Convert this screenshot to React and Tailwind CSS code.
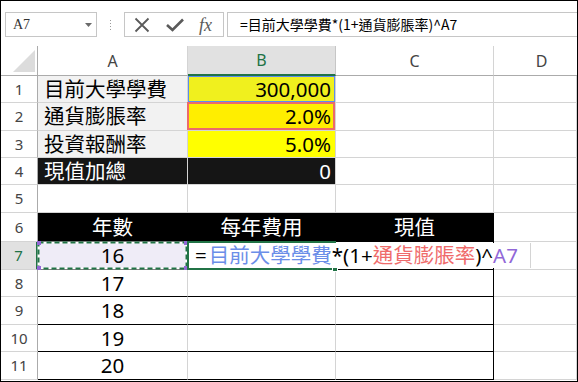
import React from "react";
import { twMerge } from "tailwind-merge";

const font = "font-['Noto_Sans','Noto_Sans_CJK_TC',sans-serif]";

function Cell({ w, className, children }) {
  return (
    <div
      className={twMerge(
        "relative shrink-0 h-full flex items-center whitespace-nowrap border-r border-b border-r-[#d4d4d4] border-b-[#d4d4d4] text-[20.5px] leading-none text-black",
        w,
        className
      )}
    >
      {children}
    </div>
  );
}

function RowHead({ n, active }) {
  return (
    <div
      className={twMerge(
        "w-[37px] shrink-0 h-full flex items-center justify-center border-r border-b border-r-[#ababab] border-b-[#d4d4d4] bg-white text-[15px] text-[#444]",
        active && "bg-[#e1e1e1] text-[#217346] border-r-2 border-r-[#217346]"
      )}
    >
      {n}
    </div>
  );
}

function Row({ h, children }) {
  return <div className={`flex ${h}`}>{children}</div>;
}

export default function App() {
  return (
    <div className={`w-[578px] h-[382px] overflow-hidden border border-black bg-white ${font} flex flex-col`}>
      {/* formula bar */}
      <div className="h-[45px] shrink-0 flex items-start pt-[11px] pl-[4px]">
        <div className="w-[92px] h-[25px] border border-[#c6c6c6] flex items-center pl-[7px] pr-[4px]">
          <span className="flex-1 font-['Liberation_Serif',serif] text-[14px] text-[#333]">A7</span>
          <svg width="7" height="4" viewBox="0 0 7 4">
            <path d="M0 0 L7 0 L3.5 4 Z" fill="#6a6a6a" />
          </svg>
        </div>
        <div className="ml-[13px] mt-[8px] flex flex-col gap-[2px]">
          <span className="w-px h-px bg-[#9a9a9a]" />
          <span className="w-px h-px bg-[#9a9a9a]" />
          <span className="w-px h-px bg-[#9a9a9a]" />
          <span className="w-px h-px bg-[#9a9a9a]" />
        </div>
        <div className="ml-[13px] w-[100px] h-[25px] border border-[#c6c6c6] flex items-center">
          <svg className="ml-[9px]" width="16" height="16" viewBox="0 0 16 16">
            <path d="M1.5 1.5 L14.5 14.5 M14.5 1.5 L1.5 14.5" stroke="#5a5a5a" strokeWidth="1.8" />
          </svg>
          <svg className="ml-[16px]" width="18" height="14" viewBox="0 0 18 14">
            <path d="M1 7 L6.5 12 L17 1.5" stroke="#5a5a5a" strokeWidth="2.6" fill="none" />
          </svg>
          <span className="ml-[15px] font-['Liberation_Serif',serif] italic text-[18px] leading-none text-[#5a5a5a]">
            fx
          </span>
        </div>
        <div className="ml-[3px] flex-1 h-[25px] border border-r-0 border-[#c6c6c6] flex items-center pl-[12px] text-[14px] text-black font-['Noto_Sans_CJK_TC',sans-serif]">
          =目前大學學費*(1+通貨膨脹率)^A7
        </div>
      </div>

      {/* column headers */}
      <div className="flex h-[30px] shrink-0 text-[16px] text-[#444]">
        <div className="relative w-[37px] shrink-0 border-r border-b border-r-[#ababab] border-b-[#ababab]">
          <svg className="absolute left-[12px] top-[4px]" width="22" height="22" viewBox="0 0 22 22">
            <path d="M22 0 L22 22 L0 22 Z" fill="#dcdcdc" />
          </svg>
        </div>
        <div className="w-[150px] shrink-0 flex items-center justify-center border-r border-b border-r-[#d4d4d4] border-b-[#ababab]">A</div>
        <div className="w-[148px] shrink-0 flex items-center justify-center bg-[#e1e1e1] text-[#217346] border-r border-r-[#c6c6c6] border-b-2 border-b-[#217346]">B</div>
        <div className="w-[158px] shrink-0 flex items-center justify-center border-r border-b border-r-[#d4d4d4] border-b-[#ababab]">C</div>
        <div className="flex-1 flex items-center justify-center pl-[12px] border-b border-b-[#ababab]">D</div>
      </div>

      {/* row 1 */}
      <Row h="h-[27px]">
        <RowHead n={1} />
        <Cell w="w-[150px]" className="bg-[#f2f2f2] pl-[6px]">目前大學學費</Cell>
        <Cell w="w-[148px]" className="bg-[#f0f01e] justify-end pr-[4px]">
          300,000
          <span className="absolute inset-0 border border-[#5b8def]" />
        </Cell>
        <Cell w="w-[158px]" />
        <Cell w="flex-1 min-w-0" />
      </Row>

      {/* row 2 */}
      <Row h="h-[28px]">
        <RowHead n={2} />
        <Cell w="w-[150px]" className="bg-[#f2f2f2] pl-[6px]">通貨膨脹率</Cell>
        <Cell w="w-[148px]" className="bg-[#ffee00] justify-end pr-[4px]">
          2.0%
          <span className="absolute -left-px -top-px right-0 bottom-0 border-2 border-[#ec6a6a]" />
        </Cell>
        <Cell w="w-[158px]" />
        <Cell w="flex-1 min-w-0" />
      </Row>

      {/* row 3 */}
      <Row h="h-[27px]">
        <RowHead n={3} />
        <Cell w="w-[150px]" className="bg-[#f2f2f2] pl-[6px]">投資報酬率</Cell>
        <Cell w="w-[148px]" className="bg-[#ffff00] justify-end pr-[4px]">5.0%</Cell>
        <Cell w="w-[158px]" />
        <Cell w="flex-1 min-w-0" />
      </Row>

      {/* row 4 */}
      <Row h="h-[27px]">
        <RowHead n={4} />
        <Cell w="w-[150px]" className="bg-[#151515] text-white pl-[6px]">現值加總</Cell>
        <Cell w="w-[148px]" className="bg-[#151515] text-white justify-end pr-[4px]">0</Cell>
        <Cell w="w-[158px]" />
        <Cell w="flex-1 min-w-0" />
      </Row>

      {/* row 5 */}
      <Row h="h-[28px]">
        <RowHead n={5} />
        <Cell w="w-[150px]" />
        <Cell w="w-[148px]" />
        <Cell w="w-[158px]" />
        <Cell w="flex-1 min-w-0" />
      </Row>

      {/* row 6 */}
      <Row h="h-[29px]">
        <RowHead n={6} />
        <Cell w="w-[150px]" className="bg-black text-white justify-center border-r-black border-b-black">年數</Cell>
        <Cell w="w-[148px]" className="bg-black text-white justify-center border-r-black border-b-black">每年費用</Cell>
        <Cell w="w-[158px]" className="bg-black text-white justify-center border-r-black border-b-black">現值</Cell>
        <Cell w="flex-1 min-w-0" />
      </Row>

      {/* row 7 */}
      <Row h="h-[28px]">
        <RowHead n={7} active />
        <Cell w="w-[150px]" className="bg-[#efecf7] justify-center border-b-black">
          16
          <svg className="absolute -left-px -top-px z-20" width="152" height="29" viewBox="0 0 152 29">
            <rect x="1.5" y="1.5" width="148" height="26" fill="none" stroke="#ffffff" strokeWidth="2" />
            <rect x="1.5" y="1.5" width="148" height="26" fill="none" stroke="#217346" strokeWidth="2" strokeDasharray="5 3" />
            <rect x="0" y="0" width="4" height="4" fill="#9367d6" />
            <rect x="147" y="0" width="4" height="4" fill="#9367d6" />
            <rect x="0" y="25" width="4" height="4" fill="#9367d6" />
            <rect x="147" y="25" width="4" height="4" fill="#9367d6" />
          </svg>
        </Cell>
        <Cell w="w-[148px]" className="border-b-black">
          <div className="absolute -left-px -top-px w-[149px] h-[29px] z-20 border-2 border-[#217346]">
            <span className="absolute -right-[4px] -bottom-[4px] w-[6px] h-[6px] bg-[#217346] border border-white" />
          </div>
          <div className="absolute left-[1px] top-[1px] h-[25px] w-[342px] z-30 bg-white border-r border-[#d4d4d4] flex items-center pl-[6px]">
            <span>=</span>
            <span className="text-[#6b8ee8] ml-[2px]">目前大學學費</span>
            <span>*(1+</span>
            <span className="text-[#ef6b6b]">通貨膨脹率</span>
            <span>)^</span>
            <span className="text-[#9167d8]">A7</span>
          </div>
        </Cell>
        <Cell w="w-[158px]" className="border-b-black border-r-black" />
        <Cell w="flex-1 min-w-0" />
      </Row>

      {[
        ["h-[27px]", 8, "17"],
        ["h-[28px]", 9, "18"],
        ["h-[27px]", 10, "19"],
        ["h-[28px]", 11, "20"],
      ].map(([h, n, v]) => (
        <Row key={n} h={h}>
          <RowHead n={n} />
          <Cell w="w-[150px]" className="justify-center border-b-black">{v}</Cell>
          <Cell w="w-[148px]" className="border-b-black" />
          <Cell w="w-[158px]" className="border-b-black border-r-black" />
          <Cell w="flex-1 min-w-0" />
        </Row>
      ))}
    </div>
  );
}
